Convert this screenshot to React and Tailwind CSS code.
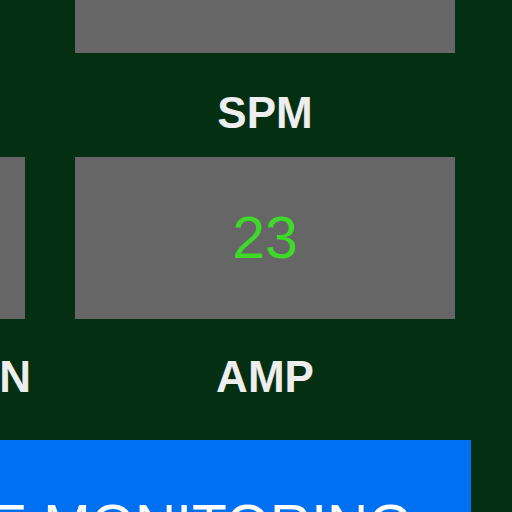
/**
 * Stroke monitor - metric tiles and start button (cropped view).
 */

const font = { fontFamily: '"Liberation Sans", Arial, sans-serif' };

function Tile({ value }) {
  return (
    <div className="h-[162px] bg-[#666666] flex items-center justify-center">
      {value && (
        <span className="text-[59px] leading-none text-[#3fd92a]">{value}</span>
      )}
    </div>
  );
}

function Label({ children, className = '' }) {
  return (
    <div className={`text-[44px] leading-[44px] font-bold text-[#eeeeee] text-center ${className}`}>
      {children}
    </div>
  );
}

export default function App() {
  return (
    <div className="w-[512px] h-[512px] overflow-hidden bg-[#052f12]" style={font}>
      <div className="-ml-[355px] -mt-[109px] w-[810px] grid grid-cols-[380px_380px] gap-x-[50px]">
        {/* Row 1 */}
        <div className="h-[162px]" />
        <Tile />
        <div className="h-[104px]" />
        <div className="h-[104px] pt-[38px]">
          <Label>SPM</Label>
        </div>

        {/* Row 2 */}
        <Tile value="" />
        <Tile value="23" />
        <div className="h-[121px] pt-[36px] flex justify-end -mr-[6px]">
          <Label>STROKE LEN</Label>
        </div>
        <div className="h-[121px] pt-[36px]">
          <Label>AMP</Label>
        </div>

        {/* Start button */}
        <button className="col-span-2 -mx-[16px] h-[120px] bg-[#0070f3] text-white text-[57px] leading-none pt-[51px] pl-[20px] text-center">
          START LIVE MONITORING
        </button>
      </div>
    </div>
  );
}
